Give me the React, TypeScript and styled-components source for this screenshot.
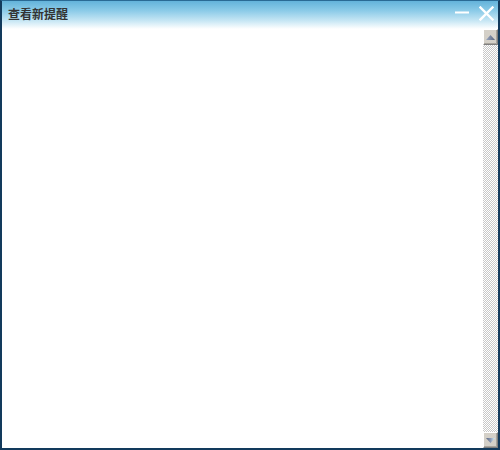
import React from "react";
import styled, { createGlobalStyle } from "styled-components";

const Global = createGlobalStyle`
  html, body { margin: 0; padding: 0; background: #ffffff; }
  #root { width: 500px; height: 450px; }
`;

const Window = styled.div`
  box-sizing: border-box;
  width: 500px;
  height: 450px;
  display: flex;
  flex-direction: column;
  border-left: 2px solid #123a5c;
  border-right: 2px solid #123a5c;
  border-bottom: 2px solid #123a5c;
  border-top: 1px solid #2a6a94;
  background: #ffffff;
  overflow: hidden;
`;

const TitleBar = styled.div`
  height: 28px;
  flex: none;
  display: flex;
  align-items: center;
  padding: 0 4px 0 6px;
  background: linear-gradient(to bottom, #63b3da 0%, #8ccbe8 35%, #c6e6f4 70%, #ffffff 100%);
`;

const Title = styled.div`
  flex: 1;
  font-family: "Noto Sans CJK SC", "Liberation Sans", sans-serif;
  font-size: 12px;
  font-weight: bold;
  color: #333333;
  line-height: 12px;
  margin-top: -3px;
`;

const TitleButton = styled.button<{ $gap: number }>`
  border: none;
  background: transparent;
  padding: 0;
  margin: -3px 0 0 ${(p) => p.$gap}px;
  width: 16px;
  height: 16px;
  display: flex;
  align-items: center;
  justify-content: center;
  cursor: pointer;
`;

const Body = styled.div`
  flex: 1;
  display: flex;
  min-height: 0;
`;

const Content = styled.div`
  flex: 1;
`;

const Scrollbar = styled.div`
  width: 15px;
  display: flex;
  flex-direction: column;
`;

const ArrowButton = styled.div`
  box-sizing: border-box;
  height: 16px;
  flex: none;
  background: #d4d0c8;
  border-top: 1px solid #ffffff;
  border-left: 1px solid #ffffff;
  border-right: 1px solid #808080;
  border-bottom: 1px solid #808080;
  box-shadow: inset -1px -1px 0 #a8a49c;
  display: flex;
  align-items: center;
  justify-content: center;
`;

const Track = styled.div`
  flex: 1;
  background-color: #ffffff;
  background-image: repeating-conic-gradient(#c8c8c8 0% 25%, #ffffff 0% 50%);
  background-size: 2px 2px;
`;

const UpArrow = () => (
  <svg width="9" height="5" viewBox="0 0 9 5">
    <defs>
      <linearGradient id="ua" x1="0" y1="0" x2="1" y2="0">
        <stop offset="0" stopColor="#9aa7c0" />
        <stop offset="1" stopColor="#5a6680" />
      </linearGradient>
    </defs>
    <polygon points="4.5,0 9,5 0,5" fill="url(#ua)" />
  </svg>
);

const DownArrow = () => (
  <svg width="9" height="5" viewBox="0 0 9 5">
    <defs>
      <linearGradient id="da" x1="0" y1="0" x2="1" y2="0">
        <stop offset="0" stopColor="#5a6680" />
        <stop offset="0.5" stopColor="#8a98b4" />
        <stop offset="1" stopColor="#d8f4ff" />
      </linearGradient>
    </defs>
    <polygon points="0,0 9,0 4.5,5" fill="url(#da)" />
  </svg>
);

export default function App() {
  return (
    <>
      <Global />
      <Window>
        <TitleBar>
          <Title>查看新提醒</Title>
          <TitleButton $gap={0} aria-label="minimize">
            <svg width="15" height="16" viewBox="0 0 15 16">
              <rect x="0" y="5.5" width="14" height="2" fill="#ffffff" />
            </svg>
          </TitleButton>
          <TitleButton $gap={8} aria-label="close">
            <svg width="15" height="15" viewBox="0 0 15 15">
              <path d="M1.5 1.5 L13.5 13.5 M13.5 1.5 L1.5 13.5" stroke="#ffffff" strokeWidth="2.4" strokeLinecap="square" />
            </svg>
          </TitleButton>
        </TitleBar>
        <Body>
          <Content />
          <Scrollbar>
            <ArrowButton>
              <UpArrow />
            </ArrowButton>
            <Track />
            <ArrowButton>
              <DownArrow />
            </ArrowButton>
          </Scrollbar>
        </Body>
      </Window>
    </>
  );
}
